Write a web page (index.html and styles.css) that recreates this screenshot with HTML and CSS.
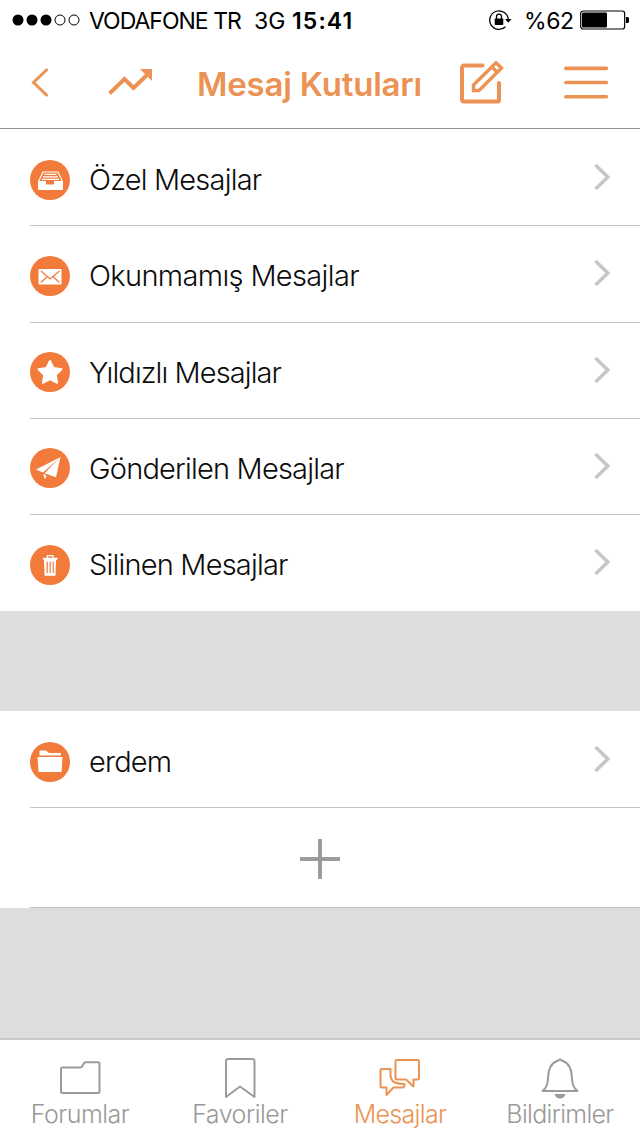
FILE: index.html
```html
<!DOCTYPE html>
<html lang="tr">
<head>
  <meta charset="UTF-8" />
  <meta name="viewport" content="width=device-width, initial-scale=1.0"/>
  <title>Mesaj Kutuları</title>
  <link rel="stylesheet" href="styles.css">
</head>
<body>

<!-- Status bar -->
<div class="status-bar">
  <svg class="signal" width="68" height="12" viewBox="0 0 68 12">
    <circle cx="6" cy="6" r="5.5"/>
    <circle cx="20" cy="6" r="5.5"/>
    <circle cx="34" cy="6" r="5.5"/>
    <circle class="empty" cx="48" cy="6" r="5"/>
    <circle class="empty" cx="62" cy="6" r="5"/>
  </svg>
  <span class="carrier">VODAFONE TR</span>
  <span class="network">3G</span>
  <span class="clock">15:41</span>
  <svg class="lock" width="24" height="22" viewBox="0 0 24 22">
    <path d="M17.500 17.800A9.300 9.300 0 1 1 20.300 10.500" fill="none" stroke="#000" stroke-width="1.3"/>
    <path d="M17 10h6.600l-3.300 3.800z"/>
    <rect x="6.700" y="9.500" width="8.600" height="6.500" rx="0.8"/>
    <path d="M8.500 10V7.700a2.500 2.500 0 0 1 5 0V10" fill="none" stroke="#000" stroke-width="1.3"/>
  </svg>
  <span class="percent">%62</span>
  <svg class="battery" width="50" height="20" viewBox="0 0 50 20">
    <rect x="0.7" y="1" width="44" height="18" rx="2.5" fill="#fff" stroke="#000" stroke-width="1.2"/>
    <rect x="2" y="2.5" width="25" height="15" rx="1"/>
    <path d="M46 7h1.5q1.500 0 1.500 1.500v3q0 1.500-1.500 1.500H46z"/>
  </svg>
</div>

<header class="nav-bar">
  <svg class="back" width="18" height="30" viewBox="0 0 18 30">
    <path d="M17.500 1L3.500 14.500l14 13.500"/>
  </svg>
  <svg class="trend" width="46" height="30" viewBox="0 0 46 30">
    <path d="M1.500 25.500L16.500 11l9 9L40 6" />
    <path class="solid" d="M32 1h12v12z"/>
  </svg>
  <h1>Mesaj Kutuları</h1>
  <svg class="compose" width="44" height="44" viewBox="0 0 44 44">
    <path d="M22.500 4.500H4.500Q2 4.500 2 7v31Q2 40.500 4.500 40.500H37.500Q39 40.500 39 39V22" stroke-linecap="round"/>
    <path d="M36 1.800L41.500 7 19 29.500h-5.500v-5.500zM32 6l5 5" stroke-width="3.400"/>
  </svg>
  <svg class="menu" width="44" height="34" viewBox="0 0 44 34">
    <path d="M1.800 2.400h40.500M1.800 16.500h40.500M1.800 30.800h40.500"/>
  </svg>
</header>

<main>
  <ul class="list">
    <li class="row">
      <svg class="icon" width="40" height="40" viewBox="0 0 40 40">
        <circle cx="20" cy="20" r="20"/>
        <path class="white" d="M8 21h8v2.500q0 1 1 1h6q1 0 1-1V21h9v8q0 1-1 1H9q-1 0-1-1z"/>
        <path class="line" d="M8.700 21l4.300-9h15l4.300 9M14.300 14.300h12.200M13 16.800h15M12 19.300h17"/>
      </svg>
      <span class="label ozel">Özel Mesajlar</span>
      <svg class="chevron" width="16" height="28" viewBox="0 0 16 28"><path d="M1.500 2L13.800 14 1.500 26"/></svg>
    </li>
    <li class="row up">
      <svg class="icon" width="40" height="40" viewBox="0 0 40 40">
        <circle cx="20" cy="20" r="20"/>
        <rect class="white" x="8.500" y="13" width="23" height="15.500" rx="0.800"/>
        <path class="cut" d="M11 15l9.200 8 9.200-8M11 26.500l6.300-6M29.400 26.500l-6.300-6"/>
      </svg>
      <span class="label unread">Okunmamış Mesajlar</span>
      <svg class="chevron" width="16" height="28" viewBox="0 0 16 28"><path d="M1.500 2L13.800 14 1.500 26"/></svg>
    </li>
    <li class="row short up">
      <svg class="icon" width="40" height="40" viewBox="0 0 40 40">
        <circle cx="20" cy="20" r="20"/>
        <path class="white round" d="M20 9l3.500 7 8 1.200-5.700 5.600 1.300 8-7.100-3.800-7.100 3.800 1.300-8-5.700-5.600 8-1.200z"/>
      </svg>
      <span class="label starred">Yıldızlı Mesajlar</span>
      <svg class="chevron" width="16" height="28" viewBox="0 0 16 28"><path d="M1.500 2L13.800 14 1.500 26"/></svg>
    </li>
    <li class="row short up">
      <svg class="icon" width="40" height="40" viewBox="0 0 40 40">
        <circle cx="20" cy="20" r="20"/>
        <path class="white" d="M30.500 9L6 21.500l7 3zM30.500 9L14.500 25.200l11.500 4zM13 26l3.600 1.400-1.600 4z"/>
      </svg>
      <span class="label">Gönderilen Mesajlar</span>
      <svg class="chevron" width="16" height="28" viewBox="0 0 16 28"><path d="M1.500 2L13.800 14 1.500 26"/></svg>
    </li>
    <li class="row short up last">
      <svg class="icon" width="40" height="40" viewBox="0 0 40 40">
        <circle cx="20" cy="20" r="20"/>
        <path class="white" d="M13 12.800h14.500v2H26l-.5 16h-11l-.5-16h-1z"/>
        <path class="line" d="M17.500 13v-2.300h5.500V13"/>
        <path class="cut" d="M17.200 16.500v11.500M20.200 16.500v11.500M23.200 16.500v11.500"/>
      </svg>
      <span class="label">Silinen Mesajlar</span>
      <svg class="chevron" width="16" height="28" viewBox="0 0 16 28"><path d="M1.500 2L13.800 14 1.500 26"/></svg>
    </li>
  </ul>

  <!-- User folders -->
  <ul class="list folders">
    <li class="row">
      <svg class="icon" width="40" height="40" viewBox="0 0 40 40">
        <circle cx="20" cy="20" r="20"/>
        <path class="white" d="M9.500 13.500V9.500q0-1 1-1h5.500l3 2.500h11q1 0 1 1v1.500z"/>
        <path class="white" d="M7.500 15h25l-.8 14q0 1-1 1H9.500q-1 0-1-1z"/>
      </svg>
      <span class="label">erdem</span>
      <svg class="chevron" width="16" height="28" viewBox="0 0 16 28"><path d="M1.500 2L13.800 14 1.500 26"/></svg>
    </li>
    <li class="row add">
      <svg width="40" height="40" viewBox="0 0 40 40">
        <path d="M0 20h40M20 0v40" stroke="#9b9b9b" stroke-width="4"/>
      </svg>
    </li>
  </ul>
</main>

<nav class="tab-bar">
  <a class="tab">
    <svg width="42" height="42" viewBox="0 0 42 42">
      <path d="M3.500 10.500h18q1.500 0 2.200-1.800l.9-2q.6-1.500 2.200-1.500H39q1.500 0 1.500 1.500V34.500q0 1.500-1.500 1.500H3.500q-1.500 0-1.500-1.500V12q0-1.500 1.500-1.500z"/>
    </svg>
    <span>Forumlar</span>
  </a>
  <a class="tab">
    <svg width="42" height="42" viewBox="0 0 42 42">
      <path d="M7 40V4q0-2 2-2h24.500q2 0 2 2V40L21 29.500z"/>
    </svg>
    <span>Favoriler</span>
  </a>
  <a class="tab active">
    <svg width="42" height="42" viewBox="0 0 42 42">
      <path d="M18 3h20.500q1.500 0 1.500 1.500V21q0 1.500-1.500 1.500H34.500v7L27 22.500H18q-1.500 0-1.500-1.500V4.500q0-1.500 1.500-1.500z"/>
      <path d="M11.500 12H3q-1.500 0-1.500 1.500V29q0 1.500 1.500 1.500h4.500V38l7-7.500h9q2 0 2-3.500-6 0-9.500-1.500T11.500 19z"/>
    </svg>
    <span>Mesajlar</span>
  </a>
  <a class="tab">
    <svg width="42" height="42" viewBox="0 0 42 42">
      <path d="M3.500 34q5-3.500 5.500-12 .3-15 9-18l1.500-.5q1.500-2.500 3 0L24 4q8.700 3 9 18 .5 8.500 5.500 12z"/>
      <path class="clapper" d="M15.500 37h11q-1.500 4.500-5.500 4.500T15.500 37z"/>
    </svg>
    <span class="notes">Bildirimler</span>
  </a>
</nav>

</body>
</html>
```
FILE: styles.css
```css
* {
  box-sizing: border-box;
}

body {
  display: flex;
  flex-direction: column;
  width: 640px;
  height: 1136px;
  margin: 0;
  background: #fff;
  color: #0c0c0c;
  font-family: Inter, "Liberation Sans", sans-serif;
}

svg {
  display: block;
  flex: none;
}

.status-bar {
  display: flex;
  align-items: center;
  height: 40px;
  padding: 0 10px 0 12px;
  font-size: 23px;
  color: #000;
  white-space: nowrap;
}

.signal .empty {
  fill: #fff;
  stroke: #000;
}

.carrier {
  width: 153px;
  margin-left: 9px;
  padding-top: 1px;
  letter-spacing: -1px;
}

.network {
  width: 31px;
  margin-left: 12px;
  padding-top: 1px;
}

.clock {
  margin-left: 7px;
  padding-top: 1px;
  font-weight: 600;
  letter-spacing: 1.1px;
}

.lock {
  margin-left: auto;
}

.percent {
  width: 49px;
  margin-left: 12px;
  padding-top: 1px;
  letter-spacing: -0.4px;
}

.battery {
  margin-left: 7px;
}

.nav-bar {
  display: flex;
  align-items: center;
  height: 89px;
  padding: 0 32px 3px 30px;
  border-bottom: 1px solid #8f8f8f;
}

.nav-bar svg {
  fill: none;
  stroke: #eb9354;
  stroke-width: 3;
}

.nav-bar .trend {
  margin-left: 60px;
  stroke-width: 4;
}

.nav-bar .solid {
  fill: #eb9354;
  stroke: none;
}

.nav-bar h1 {
  width: 226px;
  margin: 3px 0 0 43px;
  color: #eb9354;
  font-size: 33px;
  font-weight: 600;
  letter-spacing: -0.2px;
  white-space: nowrap;
}

.nav-bar .compose {
  margin-left: 37px;
  stroke-width: 4;
}

.nav-bar .menu {
  margin-left: auto;
  stroke-width: 3.6;
  stroke-linecap: round;
}

main {
  flex: 1;
  background: #ddd;
}

.list {
  margin: 0;
  padding: 0;
  background: #fff;
  list-style: none;
}

.folders {
  margin-top: 100px;
}

.row {
  display: flex;
  align-items: center;
  height: 97px;
  margin-left: 30px;
  padding: 5px 30px 0 0;
  border-bottom: 1px solid #c3c3c5;
}

.up {
  padding-top: 3px;
}

.short {
  height: 96px;
}

.last {
  border-bottom: none;
}

.icon {
  fill: #f27a3a;
}

.icon .white {
  fill: #fff;
}

.icon .round {
  stroke: #fff;
  stroke-width: 2;
  stroke-linejoin: round;
}

.icon .line {
  fill: none;
  stroke: #fff;
  stroke-width: 1.2;
}

.icon .cut {
  fill: none;
  stroke: #f27a3a;
  stroke-width: 1.2;
}

.label {
  margin-left: 19px;
  font-size: 29px;
  font-weight: 300;
  letter-spacing: -0.8px;
  white-space: nowrap;
}

.unread {
  letter-spacing: -0.65px;
}

.starred {
  letter-spacing: -0.9px;
}

.chevron {
  margin: 0 0 5px auto;
  fill: none;
  stroke: #c6c6ca;
  stroke-width: 3.5;
}

.add {
  justify-content: center;
  height: 100px;
  padding: 3px 30px 0 0;
}

.tab-bar {
  display: flex;
  height: 98px;
  border-top: 2px solid #c8c8c8;
}

.tab {
  display: flex;
  flex: 1;
  flex-direction: column;
  align-items: center;
  padding-top: 17px;
  color: #999;
  font-size: 25px;
  font-weight: 300;
  letter-spacing: -0.5px;
  line-height: 30px;
}

.tab svg {
  fill: none;
  stroke: #9b9b9b;
  stroke-width: 2;
  stroke-linejoin: round;
}

.tab .clapper {
  fill: #9b9b9b;
  stroke: none;
}

.active {
  color: #eb9354;
  letter-spacing: -0.7px;
}

.active svg {
  stroke: #eb9354;
}

.notes {
  letter-spacing: -0.7px;
}
```
